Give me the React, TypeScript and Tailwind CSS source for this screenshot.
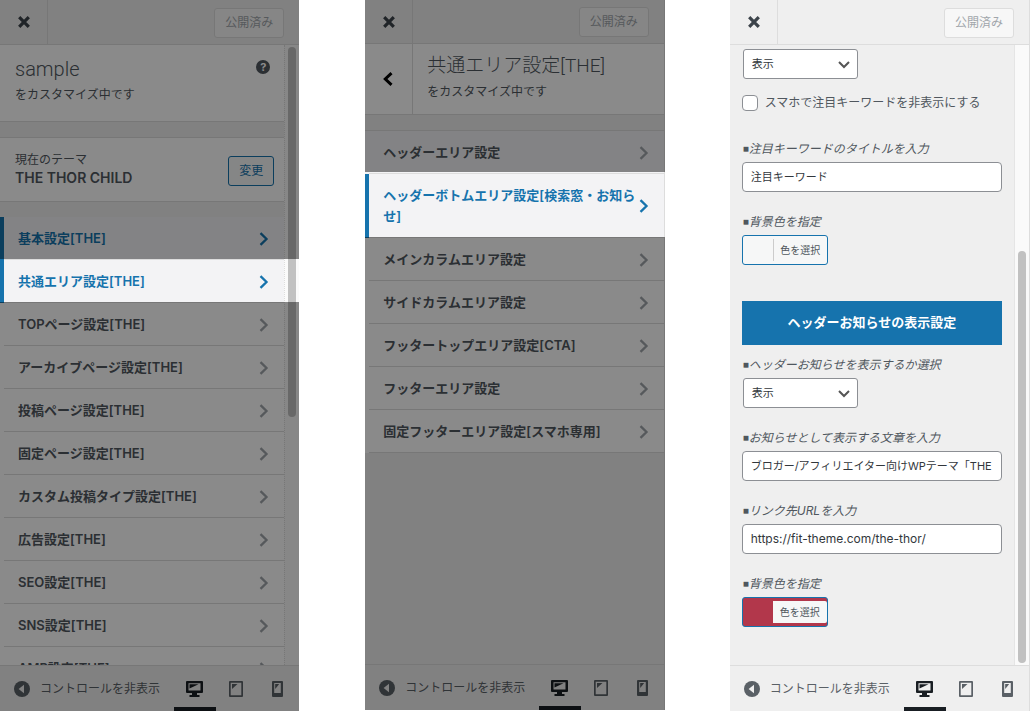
import type { ReactNode } from "react";
import clsx from "clsx";

const themeSections = [
  { label: "基本設定[THE]", active: true },
  { label: "共通エリア設定[THE]", active: true, spotlight: true },
  { label: "TOPページ設定[THE]" },
  { label: "アーカイブページ設定[THE]" },
  { label: "投稿ページ設定[THE]" },
  { label: "固定ページ設定[THE]" },
  { label: "カスタム投稿タイプ設定[THE]" },
  { label: "広告設定[THE]" },
  { label: "SEO設定[THE]" },
  { label: "SNS設定[THE]" },
  { label: "AMP設定[THE]" },
];

const areaSections = [
  { label: "ヘッダーエリア設定", shaded: true },
  { label: "ヘッダーボトムエリア設定[検索窓・お知らせ]", active: true, spotlight: true },
  { label: "メインカラムエリア設定" },
  { label: "サイドカラムエリア設定" },
  { label: "フッタートップエリア設定[CTA]" },
  { label: "フッターエリア設定" },
  { label: "固定フッターエリア設定[スマホ専用]" },
];

type Section = { label: string; active?: boolean; shaded?: boolean; spotlight?: boolean };

function Header({ short }: { short?: boolean }) {
  return (
    <header className={clsx("flex shrink-0 border-b border-[#ddd]", short ? "h-11 border-r" : "h-[45px]")}>
      <button aria-label="閉じる" className="flex w-12 items-center justify-center border-r border-[#ddd] pl-px text-[#3c434a]">
        <svg width="12" height="12" viewBox="0 0 12 12" fill="none" stroke="currentColor" strokeWidth="3.2">
          <path d="M1.2 1.2l9.6 9.6M10.8 1.2l-9.6 9.6" />
        </svg>
      </button>
      <div className={clsx("flex flex-1 items-center justify-end", short ? "pr-[15px]" : "pt-px pr-[15px]")}>
        <button disabled className="h-[30px] w-[70px] rounded-[3px] border border-[#ddd] bg-[#f7f7f7] pt-px text-[12px] text-[#a0a5aa]">
          公開済み
        </button>
      </div>
    </header>
  );
}

function Footer({ edge }: { edge?: boolean }) {
  return (
    <footer className={clsx("relative flex h-[46px] shrink-0 border-t border-[#ddd] bg-[#efefef] pr-px text-[#5a6066]", edge && "border-r")}>
      <button className="flex flex-1 items-center gap-[10px] pt-px pl-[14px] text-[12px]">
        <svg width="16" height="16" viewBox="0 0 16 16">
          <circle cx="8" cy="8" r="8" fill="currentColor" />
          <path d="M10 3.8v8.4L4.6 8z" fill="#efefef" />
        </svg>
        コントロールを非表示
      </button>
      <button aria-label="デスクトップ" className="flex w-[42px] items-center justify-center border-b-4 border-[#191e23] pt-1 pr-px text-[#191e23]">
        <svg width="17" height="16" viewBox="0 0 17 16" fill="currentColor">
          <path fillRule="evenodd" d="M1 0h15q1 0 1 1v10q0 1-1 1h-5v2h2.500v2h-10v-2H6v-2H1q-1 0-1-1V1q0-1 1-1zm1.500 2.200v7.300h12V2.200z" />
          <path d="M3.500 3.200h9L3.500 7.500z" />
        </svg>
      </button>
      <button aria-label="タブレット" className="flex w-[41px] items-center justify-center pr-px">
        <svg width="14" height="16" viewBox="0 0 14 16" fill="currentColor">
          <path fillRule="evenodd" d="M1 0h12q1 0 1 1v14q0 1-1 1H1q-1 0-1-1V1q0-1 1-1zm.7 1.700v12.600h10.600V1.700z" />
          <path d="M3 3h5.500L3 8z" />
        </svg>
      </button>
      <button aria-label="スマートフォン" className="flex w-[41px] items-center justify-center">
        <svg width="11" height="16" viewBox="0 0 11 16" fill="currentColor">
          <path fillRule="evenodd" d="M1 0h9q1 0 1 1v14q0 1-1 1H1q-1 0-1-1V1q0-1 1-1zm1.200 2v10h6.600V2z" />
          <path d="M3.200 3h4L3.200 8z" />
        </svg>
      </button>
    </footer>
  );
}

function SectionList({ items, gutter }: { items: Section[]; gutter?: boolean }) {
  return (
    <ul>
      {items.map((item) => (
        <li key={item.label} className="relative">
          <button
            className={clsx(
              "flex w-full items-center border-l-4 text-left text-[13px] leading-[21px] font-semibold",
              item.active && "border-[#1673ad] bg-[#f3f3f5] text-[#1673ad]",
              item.shaded && "border-[#f3f3f5] bg-[#f3f3f5] text-[#50575e]",
              !item.active && !item.shaded && "border-white bg-white text-[#50575e]",
            )}
          >
            <span className="flex flex-1 items-center justify-between border-b border-[#ddd] pt-[11px] pr-[15px] pb-[10px] pl-[14px]">
              <span>{item.label}</span>
              <svg width="10" height="14" viewBox="0 0 10 14" fill="none" stroke="currentColor" strokeWidth="2.3" className={clsx("shrink-0", !item.active && "text-[#a0a5aa]")}>
                <path d="M1.500 1.200L7.500 7l-6 5.800" />
              </svg>
            </span>
          </button>
          {/* Everything outside the highlighted row is dimmed */}
          {item.spotlight && (
            <div className={clsx("pointer-events-none absolute bottom-px left-0 z-10 shadow-[0_0_0_2000px_rgba(0,0,0,0.46)]", gutter ? "-top-px -right-4" : "-top-0.5 -right-px")} />
          )}
        </li>
      ))}
    </ul>
  );
}

function Select({ label, id }: { label?: string; id?: string }) {
  return (
    <div className="relative ml-px h-[30px] w-[115px]">
      <select id={id} aria-label={label} className="h-full w-full appearance-none rounded-[3px] border border-[#8c8f94] bg-white pl-2 text-[11px] text-[#32373c]">
        <option>表示</option>
        <option>非表示</option>
      </select>
      <svg className="pointer-events-none absolute top-3 right-2" width="12" height="8" viewBox="0 0 12 8" fill="none" stroke="#555" strokeWidth="2">
        <path d="M1 1l5 5 5-5" />
      </svg>
    </div>
  );
}

function Field({ label, id, children }: { label: string; id: string; children: ReactNode }) {
  return (
    <div className="flex flex-col gap-1">
      <label htmlFor={id} className="flex h-5 items-center pt-px pl-px text-[12px] text-[#50575e] italic">
        <span className="font-['Liberation_Sans'] text-[10px]">■</span>
        {label}
      </label>
      {children}
    </div>
  );
}

function TextInput({ id, value, latin }: { id: string; value: string; latin?: boolean }) {
  return (
    <input
      id={id}
      defaultValue={value}
      className={clsx("h-[30px] w-full rounded-[4px] border border-[#8c8f94] bg-white px-2 pb-0.5 text-[#32373c]", latin ? "text-[12px]" : "text-[11px]")}
    />
  );
}

function ColorButton({ id, filled }: { id: string; filled?: boolean }) {
  return (
    <button
      id={id}
      type="button"
      className={clsx("flex h-[30px] w-[86px] items-center justify-end rounded-[3px] border border-[#1673ad]", filled ? "bg-[#b2374b]" : "bg-[#f6f7f7]")}
    >
      <span className={clsx("flex h-[22px] w-[54px] items-center justify-center rounded-r-[2px] bg-[#f6f7f7] text-[10px] text-[#50575e]", !filled && "border-l border-[#ccc]")}>
        色を選択
      </span>
    </button>
  );
}

export default function App() {
  return (
    <main className="flex h-screen gap-[65px] overflow-hidden bg-white pb-px font-[Inter,'Noto_Sans_CJK_JP',sans-serif] text-[#50575e]">
      <section className="relative flex min-w-0 flex-1 flex-col overflow-hidden border-r border-white bg-[#efefef]">
        <Header />
        <div className="flex min-h-0 flex-1">
          <div className="flex h-0 min-w-0 flex-1 flex-col gap-[15px]">
            <div className="flex h-[77px] shrink-0 justify-between border-b border-[#ddd] bg-white pt-3 pr-[14px] pl-[15px]">
              <div>
                <h1 className="font-[Roboto,'Noto_Sans_CJK_JP',sans-serif] text-[20px] leading-6 font-light">sample</h1>
                <p className="mt-1 text-[12px] leading-5">をカスタマイズ中です</p>
              </div>
              <button aria-label="ヘルプ" className="mt-[3px] h-[14px] w-[14px] rounded-full bg-[#50575e] text-[11px] leading-[14px] font-bold text-white">
                ?
              </button>
            </div>
            <div className="flex h-[65px] shrink-0 items-center justify-between border-y border-[#ddd] bg-white pr-[10px] pl-[15px]">
              <div className="pb-0.5 leading-[18px]">
                <p className="text-[12px]">現在のテーマ</p>
                <h2 className="text-[14px] font-semibold">THE THOR CHILD</h2>
              </div>
              <button className="mt-0.5 h-[30px] w-[46px] rounded-[3px] border border-[#1673ad] bg-[#f6f7f7] text-[12px] text-[#1673ad]">変更</button>
            </div>
            <SectionList items={themeSections} gutter />
          </div>
          <div className="w-[15px] border-l border-dotted border-[#ddd] bg-[#fafafa] pt-[2px] pl-[3px]">
            <div className="h-[370px] w-2 rounded-full bg-[#c1c1c1]" />
          </div>
        </div>
        <Footer />
      </section>

      <section className="relative mb-px flex min-w-0 flex-1 flex-col overflow-hidden bg-[#efefef]">
        <Header short />
        <div className="min-h-0 flex-1 border-r border-[#ddd]">
          <div className="mb-[15px] flex h-[71px] border-b border-[#ddd] bg-white">
            <button aria-label="戻る" className="flex w-12 items-center justify-center border-r border-[#ddd] pr-px text-black">
              <svg width="10" height="14" viewBox="0 0 10 14" fill="none" stroke="currentColor" strokeWidth="3">
                <path d="M8.500 1.200L2.300 7l6.200 5.800" />
              </svg>
            </button>
            <div className="pt-[10px] pl-[14px]">
              <h1 className="font-[Roboto,'Noto_Sans_CJK_JP',sans-serif] text-[19px] leading-6 font-light">共通エリア設定[THE]</h1>
              <p className="mt-1 text-[12px] leading-5">をカスタマイズ中です</p>
            </div>
          </div>
          <div className="border-t border-[#ddd]">
            <SectionList items={areaSections} />
          </div>
        </div>
        <Footer edge />
      </section>

      <section className="flex min-w-0 flex-1 flex-col overflow-hidden border-r border-[#ddd] bg-[#efefef]">
        <Header />
        <div className="flex min-h-0 flex-1">
          <form className="min-w-0 flex-1 px-3 pt-1">
            <Select label="注目キーワードの表示" />
            <label className="mt-4 mb-[27px] flex h-4 items-center gap-[7px] text-[12px]">
              <input type="checkbox" className="h-4 w-4 appearance-none rounded-[4px] border border-[#8c8f94] bg-white" />
              スマホで注目キーワードを非表示にする
            </label>
            <div className="flex flex-col gap-[19px]">
              <Field label="注目キーワードのタイトルを入力" id="keyword-title">
                <TextInput id="keyword-title" value="注目キーワード" />
              </Field>
              <Field label="背景色を指定" id="keyword-color">
                <ColorButton id="keyword-color" />
              </Field>
            </div>
            <h2 className="mt-9 mb-[9px] flex h-11 items-center justify-center bg-[#1673ad] text-[13px] font-bold text-white">
              ヘッダーお知らせの表示設定
            </h2>
            <div className="flex flex-col gap-[19px]">
              <Field label="ヘッダーお知らせを表示するか選択" id="notice-display">
                <Select id="notice-display" />
              </Field>
              <Field label="お知らせとして表示する文章を入力" id="notice-text">
                <TextInput id="notice-text" value="ブロガー/アフィリエイター向けWPテーマ「THE THOR」" />
              </Field>
              <Field label="リンク先URLを入力" id="notice-url">
                <TextInput id="notice-url" value="https://fit-theme.com/the-thor/" latin />
              </Field>
              <Field label="背景色を指定" id="notice-color">
                <ColorButton id="notice-color" filled />
              </Field>
            </div>
          </form>
          <div className="flex w-[15px] items-end border-l border-[#e5e5e5] bg-[#fafafa] pb-[2px] pl-[3px]">
            <div className="h-[412px] w-2 rounded-full bg-[#c1c1c1]" />
          </div>
        </div>
        <Footer />
      </section>
    </main>
  );
}
